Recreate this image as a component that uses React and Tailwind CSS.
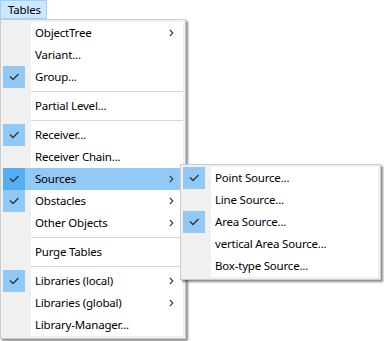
import React from "react";

function Check() {
  return (
    <svg width="22" height="22" viewBox="0 0 22 22" className="block">
      <path d="M7 10.5 L10 13.5 L15.5 8" fill="none" stroke="#333" strokeWidth="1.3" />
    </svg>
  );
}

function Chevron() {
  return (
    <svg width="5" height="8" viewBox="0 0 5 8" className="block">
      <path d="M0.8 0.8 L3.8 4 L0.8 7.2" fill="none" stroke="#333" strokeWidth="1.1" />
    </svg>
  );
}

function Item({ label, checked, arrow, hot }) {
  return (
    <div className={"flex h-[22px] " + (hot ? "bg-[#91c9f7]" : "")}>
      <div className={"w-[28px] shrink-0 " + (hot ? "" : "bg-[#f0f0f0]")}>
        {checked && (
          <div className={"w-[22px] h-[22px] " + (hot ? "bg-[#56aef2]" : "bg-[#90c8f6]")}>
            <Check />
          </div>
        )}
      </div>
      <div className={"flex-1 flex items-center pl-[4px] pr-[9px] " + (hot ? "" : "bg-white")}>
        <span className="flex-1 whitespace-nowrap leading-[22px]">{label}</span>
        {arrow && <Chevron />}
      </div>
    </div>
  );
}

function Sep() {
  return (
    <div className="flex h-[7px]">
      <div className="w-[28px] bg-[#f0f0f0]" />
      <div className="flex-1 bg-white pt-[3px]">
        <div className="h-px bg-[#d7d7d7]" />
      </div>
    </div>
  );
}

export default function App() {
  return (
    <div className="relative w-[384px] h-[341px] bg-white overflow-hidden text-[11.5px] tracking-[-0.2px] text-black font-['Segoe_UI','Noto_Sans',sans-serif]">
      <div className="flex h-[19px]">
        <div className="h-[19px] w-[47px] bg-[#cce8ff] border border-[#99d1ff] pl-[7px] leading-[17px]">Tables</div>
      </div>

      <div className="absolute left-0 top-[19px] w-[186px] bg-[#f0f0f0] border border-[#cccccc] p-[2px] shadow-[2px_2px_2px_rgba(0,0,0,0.45)]">
        <Item label="ObjectTree" arrow />
        <Item label="Variant..." />
        <Item label="Group..." checked />
        <Sep />
        <Item label="Partial Level..." />
        <Sep />
        <Item label="Receiver..." checked />
        <Item label="Receiver Chain..." />
        <Item label="Sources" checked arrow hot />
        <Item label="Obstacles" checked arrow />
        <Item label="Other Objects" arrow />
        <Sep />
        <Item label="Purge Tables" />
        <Sep />
        <Item label="Libraries (local)" checked arrow />
        <Item label="Libraries (global)" arrow />
        <Item label="Library-Manager..." />
      </div>

      <div className="absolute left-[180px] top-[164px] w-[201px] bg-[#f0f0f0] border border-[#cccccc] p-[2px] shadow-[2px_2px_2px_rgba(0,0,0,0.45)]">
        <Item label="Point Source..." checked />
        <Item label="Line Source..." />
        <Item label="Area Source..." checked />
        <Item label="vertical Area Source..." />
        <Item label="Box-type Source..." />
      </div>
    </div>
  );
}
